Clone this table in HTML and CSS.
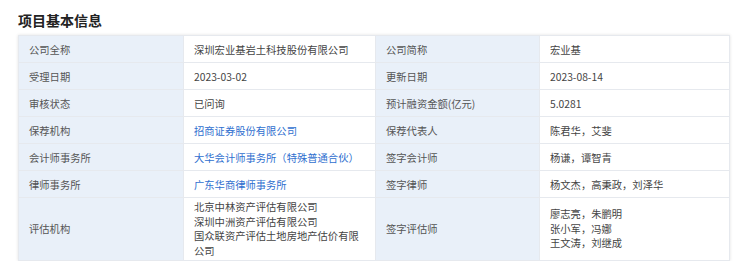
FILE: index.html
```html
<!DOCTYPE html>
<html lang="zh">
<head>
<meta charset="utf-8">
<link rel="stylesheet" href="styles.css">
</head>
<body>
<div class="page">
  <h2 class="title">项目基本信息</h2>
  <table class="info">
    <colgroup>
      <col class="c1"><col class="c2"><col class="c3"><col class="c4">
    </colgroup>
    <tbody>
      <tr><td class="lbl">公司全称</td><td class="val">深圳宏业基岩土科技股份有限公司</td><td class="lbl">公司简称</td><td class="val">宏业基</td></tr>
      <tr><td class="lbl">受理日期</td><td class="val">2023-03-02</td><td class="lbl">更新日期</td><td class="val">2023-08-14</td></tr>
      <tr><td class="lbl">审核状态</td><td class="val">已问询</td><td class="lbl">预计融资金额(亿元)</td><td class="val">5.0281</td></tr>
      <tr><td class="lbl">保荐机构</td><td class="val"><a class="link">招商证券股份有限公司</a></td><td class="lbl">保荐代表人</td><td class="val">陈君华，艾斐</td></tr>
      <tr><td class="lbl">会计师事务所</td><td class="val"><a class="link">大华会计师事务所（特殊普通合伙）</a></td><td class="lbl">签字会计师</td><td class="val">杨谦，谭智青</td></tr>
      <tr><td class="lbl">律师事务所</td><td class="val"><a class="link">广东华商律师事务所</a></td><td class="lbl">签字律师</td><td class="val">杨文杰，高秉政，刘泽华</td></tr>
      <tr class="tall"><td class="lbl">评估机构</td><td class="val">北京中林资产评估有限公司<br>深圳中洲资产评估有限公司<br>国众联资产评估土地房地产估价有限公司</td><td class="lbl">签字评估师</td><td class="val">廖志亮，朱鹏明<br>张小军，冯娜<br>王文涛，刘继成</td></tr>
    </tbody>
  </table>
</div>
</body>
</html>
```
FILE: styles.css
```css
html, body {
  margin: 0;
  padding: 0;
  background: #ffffff;
}
.page {
  padding: 12px 21px 0 18px;
  font-family: "Noto Sans CJK SC", "Noto Sans", sans-serif;
}
.title {
  margin: 0 0 6px 0;
  font-size: 14px;
  line-height: 17px;
  font-weight: 700;
  color: #222;
}
.info {
  width: 711px;
  border-collapse: collapse;
  table-layout: fixed;
  box-shadow: 0 0 3px rgba(0, 0, 0, 0.12);
  font-size: 10.3px;
  line-height: 13px;
}
.c1 { width: 165px; }
.c2 { width: 192px; }
.c3 { width: 164px; }
.c4 { width: 190px; }
.info td {
  border: 1px solid #e6e9ee;
  padding: 7px 10px 6px 10px;
  vertical-align: middle;
}
.lbl {
  background: #e9f0f9;
  color: #555;
  padding-left: 11px;
}
.val {
  background: #fff;
  color: #444;
}
.link {
  color: #2f6fcf;
  text-decoration: none;
}
.tall td {
  line-height: 14.5px;
  padding-top: 2px;
  padding-bottom: 2px;
}
```
